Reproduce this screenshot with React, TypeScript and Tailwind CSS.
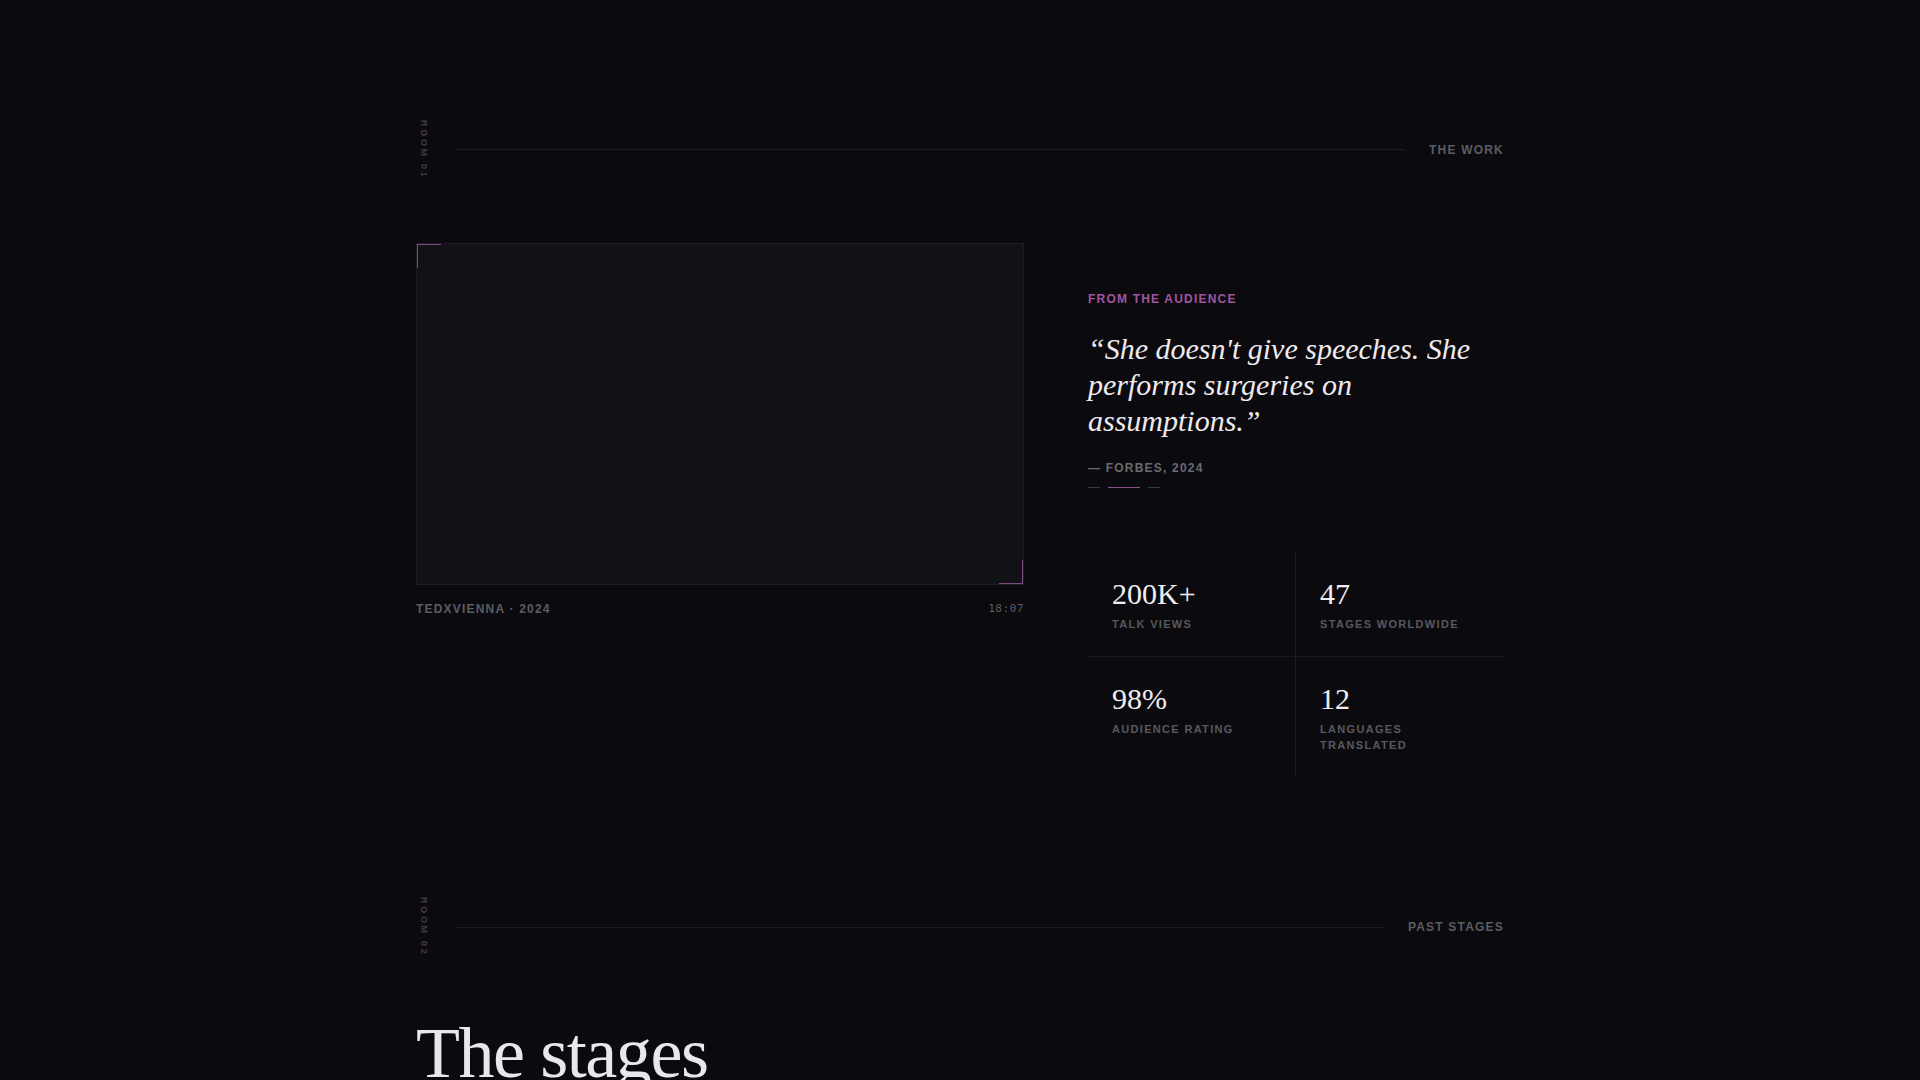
import React from "react";

function SectionHeader({ room, title }: { room: string; title: string }) {
  return (
    <div className="flex items-center gap-6">
      <span className="w-4 text-[9px] font-bold leading-4 tracking-[0.3em] text-[#45354b] [writing-mode:vertical-rl]">
        {room}
      </span>
      <div className="h-px flex-1 bg-[#1b1b21]" />
      <span className="text-[12px] font-bold leading-4 tracking-[0.1em] text-[#5c5c63]">{title}</span>
    </div>
  );
}

const stats = [
  { value: "200K+", label: "TALK VIEWS" },
  { value: "47", label: "STAGES WORLDWIDE" },
  { value: "98%", label: "AUDIENCE RATING" },
  { value: "12", label: "LANGUAGES TRANSLATED" },
];

const cellClasses = [
  "border-r border-b border-[#1a1a20] p-6",
  "border-b border-[#1a1a20] p-6",
  "border-r border-[#1a1a20] px-6 pt-6 pb-[22px]",
  "px-6 pt-6 pb-[22px]",
];

export default function App() {
  return (
    <div className="min-h-screen bg-[#0b0b0f] font-['Liberation_Sans',Arial,sans-serif] text-white">
      <div className="mx-auto w-[1088px] pt-[120px] pb-40">
        <SectionHeader room="ROOM 01" title="THE WORK" />

        <div className="mt-16 grid grid-cols-[608px_416px] items-start gap-x-16">
          <div>
            <div className="relative aspect-video border border-[#1c1c22] bg-[#111216]">
              <span className="absolute left-0 top-0 h-6 w-6 border-l border-t border-[#7b4a80]" />
              <span className="absolute bottom-0 right-0 h-6 w-6 border-b border-r border-[#7b4a80]" />
            </div>
            <div className="mt-4 flex items-center justify-between">
              <span className="text-[12px] font-bold leading-4 tracking-[0.1em] text-[#5c5c63]">
                TEDXVIENNA · 2024
              </span>
              <span className="font-['DejaVu_Sans_Mono',monospace] text-[11px] leading-4 tracking-[0.05em] text-[#5c5c63]">
                18:07
              </span>
            </div>
          </div>

          <div className="pt-12">
            <div className="text-[12px] font-bold leading-4 tracking-[0.1em] text-[#a0559f]">FROM THE AUDIENCE</div>
            <blockquote className="mt-6 font-['Liberation_Serif','Times_New_Roman',serif] text-[30px] italic leading-[36px] text-[#eeeaee]">
              “She doesn't give speeches. She performs surgeries on assumptions.”
            </blockquote>
            <div className="mt-[21px] text-[12px] font-bold leading-4 tracking-[0.1em] text-[#6a6a70]">— FORBES, 2024</div>
            <div className="mt-[11px] flex items-center gap-2">
              <span className="h-px w-3 bg-[#3a3a40]" />
              <span className="h-px w-8 bg-[#8d4f90]" />
              <span className="h-px w-3 bg-[#3a3a40]" />
            </div>

            <div className="mt-16 grid grid-cols-2">
              {stats.map((s, i) => (
                <div key={s.label} className={cellClasses[i]}>
                  <div className="font-['Liberation_Serif','Times_New_Roman',serif] text-[30px] leading-[36px] text-[#f1eef2]">
                    {s.value}
                  </div>
                  <div className="mt-1 text-[11px] font-bold leading-4 tracking-[0.12em] text-[#58585f]">{s.label}</div>
                </div>
              ))}
            </div>
          </div>
        </div>

        <div className="mt-[122px]">
          <SectionHeader room="ROOM 02" title="PAST STAGES" />
        </div>

        <h2 className="mt-[60px] font-['Liberation_Serif','Times_New_Roman',serif] text-[72px] font-normal leading-none tracking-[-0.02em] text-[#e9e6ec]">
          The stages
        </h2>
      </div>
    </div>
  );
}
